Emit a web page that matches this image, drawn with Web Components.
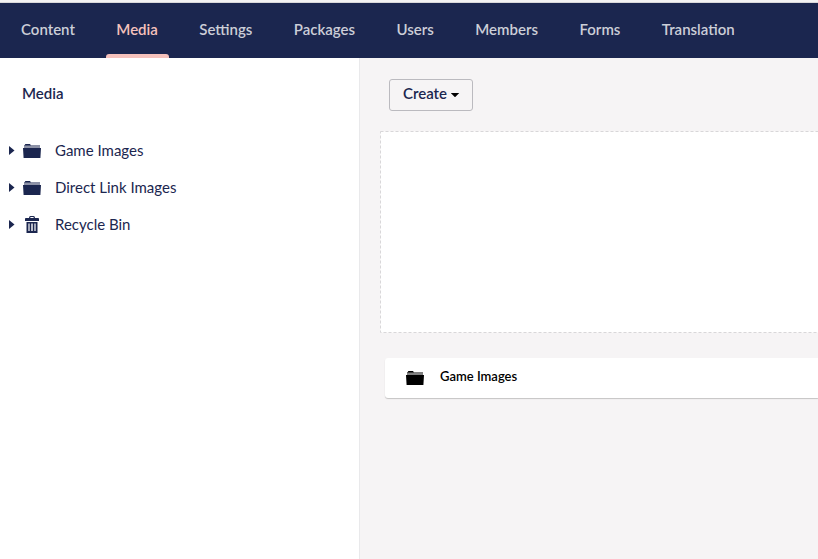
<!DOCTYPE html>
<html lang="en">
<head>
<meta charset="utf-8">
<title>Media</title>
<style>
html,body{margin:0;height:100%;overflow:hidden}
body{font-family:Lato,"Open Sans",sans-serif;font-size:15px;color:#1b264f;background:#f6f4f5}
</style>
</head>
<body>
<media-app></media-app>
<script>
const define = (name, html) => customElements.define(name, class extends HTMLElement {
  constructor() {
    super();
    this.attachShadow({ mode: 'open' }).innerHTML = html;
  }
});

define('folder-icon', `<style>:host{display:block;width:18px;height:14px}svg{display:block}</style>
<svg width="18" height="14" viewBox="0 0 18 14" fill="currentColor"><path d="M1 1H17V4H1Z" opacity=".5"/><path d="M2.4 0H7L8 1.5H1.4ZM0 4H18L17.4 14H.6Z"/></svg>`);

define('trash-icon', `<style>:host{display:block;width:14px;height:17px}svg{display:block}</style>
<svg width="14" height="17" viewBox="0 0 14 17" fill="currentColor"><path d="M4 2Q4 0 5.5 0H8.5Q10 0 10 2H13.2Q14 2 14 3V5H0V3Q0 2 .8 2ZM5.2 2H8.8Q8.8 1.1 8 1.1H6Q5.2 1.1 5.2 2Z" fill-rule="evenodd"/><path fill-rule="evenodd" d="M1.5 6H12.5V17H1.5ZM3.4 7.5V15H4.6V7.5ZM6.3 7.5V15H7.7V7.5ZM9.4 7.5V15H10.6V7.5Z"/></svg>`);

define('nav-tab', `<style>
:host{display:flex;align-items:center;box-sizing:border-box;height:55px;padding:0 20.72px;font-weight:600;position:relative;color:rgba(255,255,255,.78)}
:host([active]){color:#f5c1bc}
:host([active])::after{content:"";position:absolute;left:10px;right:10px;bottom:0;height:4px;border-radius:3px 3px 0 0;background:#f5c1bc}
span{line-height:20px;padding-bottom:3px}
</style><span><slot></slot></span>`);

define('top-nav', `<style>:host{display:flex;box-sizing:border-box;height:58px;border-top:3px solid #d9d8da;background:#1b264f;padding-left:.3px;position:relative}
:host::before{content:"";position:absolute;left:0;right:0;top:-3px;height:2px;background:#f3f2f3}</style><slot></slot>`);

define('tree-item', `<style>
:host{display:flex;align-items:center;height:37px}
.caret{width:5.5px;height:9px;margin:0 -.5px 0 9px;background:currentColor;clip-path:polygon(0 0,100% 50%,0 100%)}
.icon{width:18px;margin:0 14px 0 9px;display:flex;justify-content:center}
span{line-height:20px;padding-bottom:2px}
</style><i class="caret"></i><div class="icon"><slot name="icon"></slot></div><span><slot></slot></span>`);

define('side-tree', `<style>:host{display:block;box-sizing:border-box;width:360px;background:#fff;border-right:1px solid #e9e9eb;padding-top:25px}
h1{margin:0 0 29px 22px;font:600 15px/20px Lato,sans-serif}</style><h1>Media</h1><slot></slot>`);

define('create-button', `<style>:host{display:flex;align-items:center;box-sizing:border-box;width:84px;height:32px;border:1px solid #bbbabf;border-radius:3px;padding:0 0 4px 13px;font-weight:600}
i{width:9px;height:4.5px;margin:4px 0 0 3.5px;background:#000;clip-path:polygon(0 0,100% 0,50% 100%)}</style><slot></slot><i></i>`);

define('drop-area', `<style>:host{display:block;height:202px;margin:20px 0 0 20px}svg{display:block}</style>
<svg width="438" height="202"><rect x=".5" y=".5" width="460" height="201" fill="#fff" stroke="#d8d7d9" stroke-dasharray="3 2"/></svg>`);

define('folder-card', `<style>:host{display:flex;align-items:center;box-sizing:border-box;height:40px;margin:25px 0 0 25px;padding-left:21px;background:#fff;color:#000;border-radius:3px 0 0 3px;box-shadow:0 1px 1px rgba(0,0,0,.2);font-size:13px;font-weight:600}
span{margin:0 0 4px 16px;line-height:18px}</style><folder-icon></folder-icon><span><slot></slot></span>`);

define('media-app', `<style>:host{display:flex;flex-direction:column;height:100vh;overflow:hidden}
.body{display:flex;flex:1}main{flex:1;min-width:0;background:#f6f4f5;padding-top:21px}create-button{margin-left:29px}</style>
<top-nav><nav-tab>Content</nav-tab><nav-tab active>Media</nav-tab><nav-tab>Settings</nav-tab><nav-tab>Packages</nav-tab><nav-tab>Users</nav-tab><nav-tab>Members</nav-tab><nav-tab>Forms</nav-tab><nav-tab>Translation</nav-tab></top-nav>
<div class="body"><side-tree>
<tree-item><folder-icon slot="icon"></folder-icon>Game Images</tree-item>
<tree-item><folder-icon slot="icon"></folder-icon>Direct Link Images</tree-item>
<tree-item><trash-icon slot="icon"></trash-icon>Recycle Bin</tree-item>
</side-tree><main><create-button>Create</create-button><drop-area></drop-area><folder-card>Game Images</folder-card></main></div>`);
</script>
</body>
</html>
